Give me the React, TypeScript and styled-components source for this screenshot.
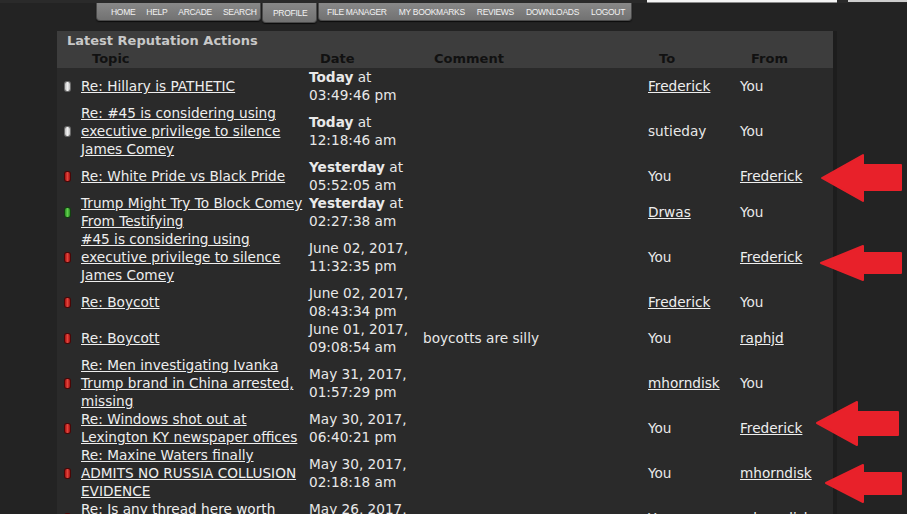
import React from "react";
import styled, { createGlobalStyle } from "styled-components";

type Person = { name: string; link?: boolean };
type Row = {
  icon: "white" | "red" | "green";
  topic: string[];
  day?: string;
  date?: string;
  time: string;
  comment?: string;
  to: Person;
  from: Person;
};

const rows: Row[] = [
  { icon: "white", topic: ["Re: Hillary is PATHETIC"], day: "Today", time: "03:49:46 pm", to: { name: "Frederick", link: true }, from: { name: "You" } },
  { icon: "white", topic: ["Re: #45 is considering using", "executive privilege to silence", "James Comey"], day: "Today", time: "12:18:46 am", to: { name: "sutieday" }, from: { name: "You" } },
  { icon: "red", topic: ["Re: White Pride vs Black Pride"], day: "Yesterday", time: "05:52:05 am", to: { name: "You" }, from: { name: "Frederick", link: true } },
  { icon: "green", topic: ["Trump Might Try To Block Comey", "From Testifying"], day: "Yesterday", time: "02:27:38 am", to: { name: "Drwas", link: true }, from: { name: "You" } },
  { icon: "red", topic: ["#45 is considering using", "executive privilege to silence", "James Comey"], date: "June 02, 2017,", time: "11:32:35 pm", to: { name: "You" }, from: { name: "Frederick", link: true } },
  { icon: "red", topic: ["Re: Boycott"], date: "June 02, 2017,", time: "08:43:34 pm", to: { name: "Frederick", link: true }, from: { name: "You" } },
  { icon: "red", topic: ["Re: Boycott"], date: "June 01, 2017,", time: "09:08:54 am", comment: "boycotts are silly", to: { name: "You" }, from: { name: "raphjd", link: true } },
  { icon: "red", topic: ["Re: Men investigating Ivanka", "Trump brand in China arrested,", "missing"], date: "May 31, 2017,", time: "01:57:29 pm", to: { name: "mhorndisk", link: true }, from: { name: "You" } },
  { icon: "red", topic: ["Re: Windows shot out at", "Lexington KY newspaper offices"], date: "May 30, 2017,", time: "06:40:21 pm", to: { name: "You" }, from: { name: "Frederick", link: true } },
  { icon: "red", topic: ["Re: Maxine Waters finally", "ADMITS NO RUSSIA COLLUSION", "EVIDENCE"], date: "May 30, 2017,", time: "02:18:18 am", to: { name: "You" }, from: { name: "mhorndisk", link: true } },
  { icon: "red", topic: ["Re: Is any thread here worth", "reading?"], date: "May 26, 2017,", time: "07:12:44 pm", to: { name: "You" }, from: { name: "mhorndisk", link: true } },
];

const navGroups = [
  { width: 165, pad: 14, gap: 11, items: ["Home", "Help", "Arcade", "Search"] },
  { width: 55, pad: 10, gap: 0, items: ["Profile"], active: true },
  { width: 314, pad: 8, gap: 12, items: ["File Manager", "My Bookmarks", "Reviews", "Downloads", "Logout"] },
];

const arrows = [
  "822,178 863,155 863,165 901,165 901,190 863,190 863,201",
  "821,263 863,246 863,253 901,253 901,273 863,273 863,280",
  "817,423 857,402 857,412 898,412 898,435 857,435 857,445",
  "826,483 863,465 863,473 901,473 901,494 863,494 863,502",
];

const App = () => {
  return (
    <Page>
      <GlobalStyle />
      <TopStrip>
        <InputEdge />
        <GrayEdge />
      </TopStrip>
      <NavRow>
        {navGroups.map((g, i) => (
          <NavSegment key={i} $width={g.width} $pad={g.pad} $gap={g.gap} $active={!!g.active}>
            {g.items.map((it) => (
              <NavLink key={it}>{it}</NavLink>
            ))}
          </NavSegment>
        ))}
      </NavRow>
      <Panel>
        <PanelHead>
          <Title>Latest Reputation Actions</Title>
          <HeadRow>
            <span />
            <HeadCell>Topic</HeadCell>
            <HeadCell>Date</HeadCell>
            <HeadCell>Comment</HeadCell>
            <HeadCell>To</HeadCell>
            <HeadCell>From</HeadCell>
          </HeadRow>
        </PanelHead>
        {rows.map((r, i) => (
          <TableRow key={i}>
            <Marker $kind={r.icon} />
            <TopicLink href="#">
              {r.topic.map((line, j) => (
                <Line key={j}>{line}</Line>
              ))}
            </TopicLink>
            <DateCell>
              <Line>{r.day ? <><b>{r.day}</b> at</> : r.date}</Line>
              <Line>{r.time}</Line>
            </DateCell>
            <Cell>{r.comment}</Cell>
            <Cell>{r.to.link ? <UserLink href="#">{r.to.name}</UserLink> : r.to.name}</Cell>
            <Cell>{r.from.link ? <UserLink href="#">{r.from.name}</UserLink> : r.from.name}</Cell>
          </TableRow>
        ))}
      </Panel>
      <ArrowLayer viewBox="0 0 907 514">
        {arrows.map((p, i) => (
          <polygon key={i} points={p} fill="#e8212a" stroke="#e8212a" strokeWidth={2} strokeLinejoin="round" />
        ))}
      </ArrowLayer>
    </Page>
  );
};

export default App;

const GlobalStyle = createGlobalStyle`
  html, body {
    margin: 0;
    background: #232323;
  }
  body {
    font-family: "DejaVu Sans", Verdana, sans-serif;
    overflow: hidden;
  }
`;

const Page = styled.div`
  position: relative;
  width: 907px;
  height: 514px;
  overflow: hidden;
  background: #232323;
`;

const TopStrip = styled.div`
  display: flex;
  gap: 11px;
  height: 3px;
  padding-left: 647px;
  background: #2a2a2a;
`;

const InputEdge = styled.div`
  width: 190px;
  height: 2px;
  background: #f4f4f4;
  border-bottom: 1px solid #8a8a8a;
`;

const GrayEdge = styled.div`
  flex: 1;
  height: 2px;
  background: #cdcdcd;
`;

const NavRow = styled.div`
  display: flex;
  align-items: flex-start;
  gap: 1px;
  margin-left: 96px;
  height: 19px;
`;

const NavSegment = styled.div<{ $width: number; $pad: number; $gap: number; $active: boolean }>`
  box-sizing: border-box;
  display: flex;
  align-items: center;
  width: ${(p) => p.$width}px;
  height: ${(p) => (p.$active ? 20 : 18)}px;
  padding-left: ${(p) => p.$pad}px;
  gap: ${(p) => p.$gap}px;
  background: linear-gradient(#888888, #727272);
  border: 1px solid #4a4a4a;
  border-top: 0;
  border-radius: 0 0 4px 4px;
  box-shadow: 0 1px 1px #0c0c0c;
`;

const NavLink = styled.span`
  font-family: "Liberation Sans", Arial, sans-serif;
  font-size: 8.5px;
  letter-spacing: -0.3px;
  text-transform: uppercase;
  color: #f2f2f2;
  white-space: nowrap;
`;

const Panel = styled.div`
  width: 776px;
  margin: 9px 0 0 57px;
  min-height: 490px;
  background: #2a2a2a;
  box-shadow: 4px 0 0 #1d1d1d;
`;

const PanelHead = styled.div`
  padding-top: 1px;
  background: #3d3d3d;
`;

const Title = styled.div`
  padding-left: 10px;
  font-size: 13px;
  font-weight: bold;
  line-height: 18px;
  color: #c8c8c8;
`;

const columns = "24px 228px 114px 225px 92px 1fr";

const HeadRow = styled.div`
  display: grid;
  grid-template-columns: ${columns};
  line-height: 18px;
`;

const HeadCell = styled.div`
  padding-left: 11px;
  font-size: 13px;
  font-weight: bold;
  color: #111111;
`;

const TableRow = styled.div`
  display: grid;
  grid-template-columns: ${columns};
  align-items: center;
  font-size: 13.65px;
  line-height: 18px;
  color: #e8e8e8;
`;

const markerColors = {
  white: ["#f0f0f0", "#bdbdbd", "#6a6a6a"],
  red: ["#e0443c", "#a80e0e", "#4a0606"],
  green: ["#5fcf4c", "#2a8a22", "#124010"],
};

const Marker = styled.span<{ $kind: "white" | "red" | "green" }>`
  display: block;
  width: 5px;
  height: 9px;
  margin-left: 8px;
  border-radius: 2px;
  background: linear-gradient(90deg, ${(p) => markerColors[p.$kind][1]}, ${(p) => markerColors[p.$kind][0]} 50%, ${(p) => markerColors[p.$kind][1]});
  box-shadow: 0 0 0 1px ${(p) => markerColors[p.$kind][2]};
`;

const TopicLink = styled.a`
  color: #eeeeee;
  text-decoration: underline;
`;

const Line = styled.span`
  display: block;
  white-space: nowrap;
`;

const DateCell = styled.div`
  b {
    font-weight: bold;
  }
`;

const Cell = styled.div`
  white-space: nowrap;
`;

const UserLink = styled.a`
  color: #eeeeee;
  text-decoration: underline;
`;

const ArrowLayer = styled.svg`
  position: absolute;
  top: 0;
  left: 0;
  width: 907px;
  height: 514px;
  pointer-events: none;
`;
